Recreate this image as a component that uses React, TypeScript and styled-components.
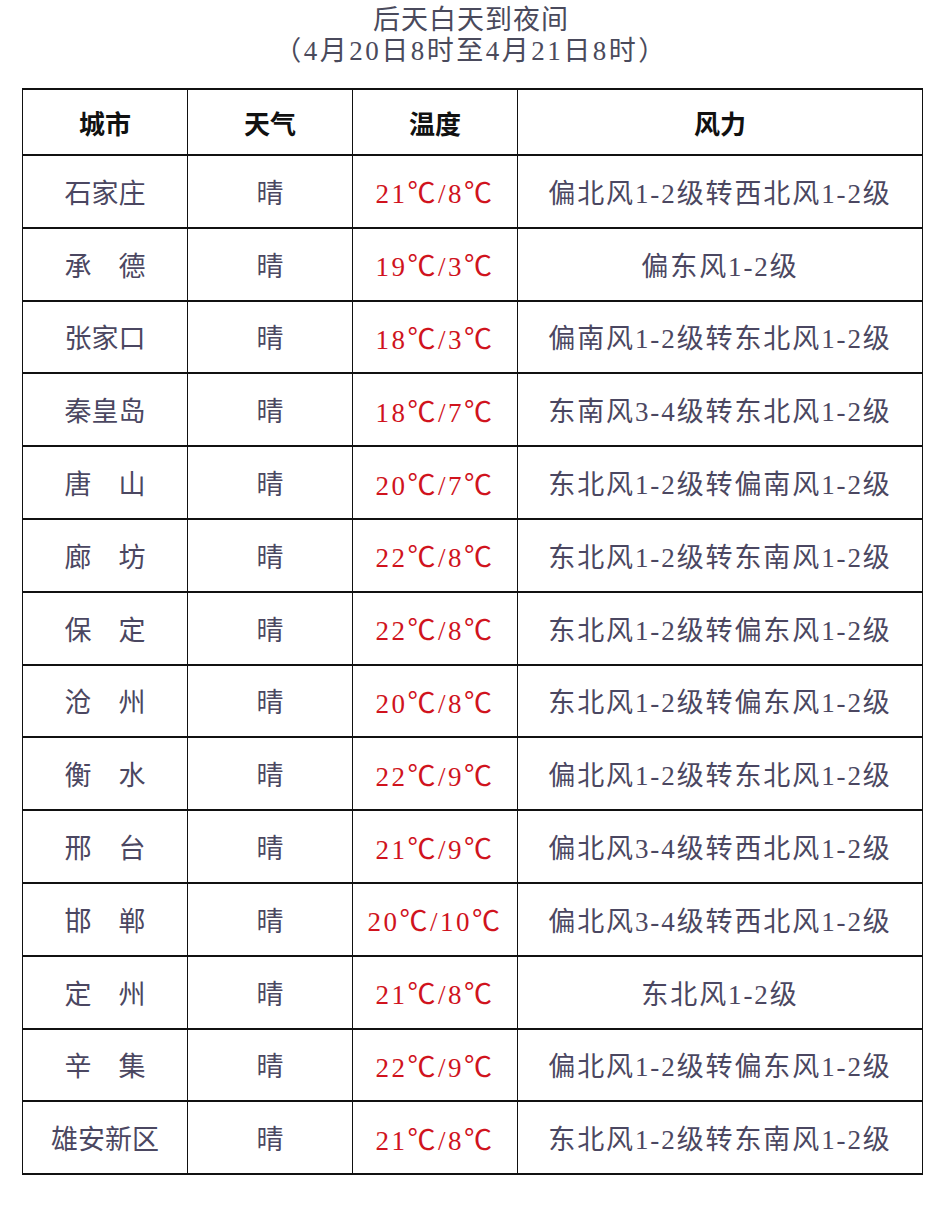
import styled, { createGlobalStyle } from "styled-components"

type TRow = {
  city: string
  weather: string
  temp: string
  wind: string
}

const rows: TRow[] = [
  { city: "石家庄", weather: "晴", temp: "21℃/8℃", wind: "偏北风1-2级转西北风1-2级" },
  { city: "承　德", weather: "晴", temp: "19℃/3℃", wind: "偏东风1-2级" },
  { city: "张家口", weather: "晴", temp: "18℃/3℃", wind: "偏南风1-2级转东北风1-2级" },
  { city: "秦皇岛", weather: "晴", temp: "18℃/7℃", wind: "东南风3-4级转东北风1-2级" },
  { city: "唐　山", weather: "晴", temp: "20℃/7℃", wind: "东北风1-2级转偏南风1-2级" },
  { city: "廊　坊", weather: "晴", temp: "22℃/8℃", wind: "东北风1-2级转东南风1-2级" },
  { city: "保　定", weather: "晴", temp: "22℃/8℃", wind: "东北风1-2级转偏东风1-2级" },
  { city: "沧　州", weather: "晴", temp: "20℃/8℃", wind: "东北风1-2级转偏东风1-2级" },
  { city: "衡　水", weather: "晴", temp: "22℃/9℃", wind: "偏北风1-2级转东北风1-2级" },
  { city: "邢　台", weather: "晴", temp: "21℃/9℃", wind: "偏北风3-4级转西北风1-2级" },
  { city: "邯　郸", weather: "晴", temp: "20℃/10℃", wind: "偏北风3-4级转西北风1-2级" },
  { city: "定　州", weather: "晴", temp: "21℃/8℃", wind: "东北风1-2级" },
  { city: "辛　集", weather: "晴", temp: "22℃/9℃", wind: "偏北风1-2级转偏东风1-2级" },
  { city: "雄安新区", weather: "晴", temp: "21℃/8℃", wind: "东北风1-2级转东南风1-2级" },
]

// ℃ needs the full-width CJK glyph, digits stay serif
function Temp({ value }: { value: string }) {
  const parts = value.split("℃")
  return (
    <>
      {parts.map((p, i) => (
        <span key={i}>
          {p}
          {i < parts.length - 1 && <Degree>℃</Degree>}
        </span>
      ))}
    </>
  )
}

export default function App() {
  return (
    <>
      <GlobalStyle />
      <Page>
        <Title>
          <Line $spacing={1}>后天白天到夜间</Line>
          <Line $spacing={2.5}>（4月20日8时至4月21日8时）</Line>
        </Title>
        <Table>
          <colgroup>
            <col style={{ width: 165 }} />
            <col style={{ width: 165 }} />
            <col style={{ width: 165 }} />
            <col style={{ width: 405 }} />
          </colgroup>
          <thead>
            <HeadRow>
              <HeadCell>城市</HeadCell>
              <HeadCell>天气</HeadCell>
              <HeadCell>温度</HeadCell>
              <HeadCell>风力</HeadCell>
            </HeadRow>
          </thead>
          <tbody>
            {rows.map((r) => (
              <Row key={r.city}>
                <Cell>{r.city}</Cell>
                <Cell>{r.weather}</Cell>
                <Cell $red $spacing={2.5}>
                  <Temp value={r.temp} />
                </Cell>
                <Cell $spacing={1.9}>{r.wind}</Cell>
              </Row>
            ))}
          </tbody>
        </Table>
      </Page>
    </>
  )
}

//styled components
const GlobalStyle = createGlobalStyle`
  body {
    margin: 0;
    background: #fff;
    font-family: "Liberation Serif", "Noto Sans CJK SC", serif;
  }
`

const Page = styled.div`
  width: 942px;
  height: 1218px;
  padding-top: 5px;
  box-sizing: border-box;
`

const Title = styled.div`
  text-align: center;
  color: #4a4a5c;
  font-size: 27px;
  line-height: 31px;
  margin-bottom: 21px;
`

const Line = styled.div<{ $spacing: number }>`
  letter-spacing: ${(p) => p.$spacing}px;
`

const Degree = styled.span`
  font-family: "Noto Sans CJK SC", sans-serif;
  font-size: 28px;
`

const Table = styled.table`
  margin-left: 22px;
  width: 901px;
  border-collapse: collapse;
  table-layout: fixed;
`

const HeadRow = styled.tr`
  height: 66px;
`

const HeadCell = styled.th`
  border: 1px solid #111;
  border-top-width: 2px;
  border-bottom-width: 2px;
  color: #111;
  font-size: 26px;
  font-weight: 700;
  text-align: center;
  vertical-align: middle;
  padding: 0;
`

const Row = styled.tr`
  height: 72.8px;
`

const Cell = styled.td<{ $red?: boolean; $spacing?: number }>`
  border: 1px solid #111;
  border-bottom-width: 2px;
  color: ${(p) => (p.$red ? "#d0131d" : "#4b4761")};
  font-size: 27px;
  letter-spacing: ${(p) => p.$spacing ?? 0}px;
  text-align: center;
  vertical-align: middle;
  padding: 0;
  white-space: nowrap;
`
